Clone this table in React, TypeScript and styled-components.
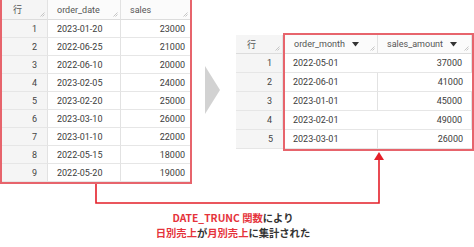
import React from "react";
import styled, { createGlobalStyle } from "styled-components";

const GlobalStyle = createGlobalStyle`
  html, body {
    margin: 0;
    padding: 0;
    background: #ffffff;
  }
  body {
    font-family: Roboto, "Noto Sans", sans-serif;
  }
`;

const FRAME_RED = "#e7646c";
const LINE_RED = "#e41f28";
const TEXT_RED = "#e5333b";

type Daily = { date: string; sales: number };
type Monthly = { month: string; amount: number };

const daily: Daily[] = [
  { date: "2023-01-20", sales: 23000 },
  { date: "2022-06-25", sales: 21000 },
  { date: "2022-06-10", sales: 20000 },
  { date: "2023-02-05", sales: 24000 },
  { date: "2023-02-20", sales: 25000 },
  { date: "2023-03-10", sales: 26000 },
  { date: "2023-01-10", sales: 22000 },
  { date: "2022-05-15", sales: 18000 },
  { date: "2022-05-20", sales: 19000 },
];

const monthly: Monthly[] = [
  { month: "2022-05-01", amount: 37000 },
  { month: "2022-06-01", amount: 41000 },
  { month: "2023-01-01", amount: 45000 },
  { month: "2023-02-01", amount: 49000 },
  { month: "2023-03-01", amount: 26000 },
];

export default function App() {
  return (
    <>
      <GlobalStyle />
      <Stage>
        <TopRow>
          <LeftFrame>
            <Grid $cols="46px 73px 69px" $header={20} $row={18}>
              <HeadCell $rowNum>
                行
                <ResizeMark />
              </HeadCell>
              <HeadCell>
                order_date
                <ResizeMark />
              </HeadCell>
              <HeadCell>
                sales
                <ResizeMark />
              </HeadCell>
              {daily.map((d, i) => (
                <React.Fragment key={i}>
                  <RowNum>{i + 1}</RowNum>
                  <Cell>{d.date}</Cell>
                  <Cell $right>{d.sales}</Cell>
                </React.Fragment>
              ))}
            </Grid>
          </LeftFrame>

          <ArrowSlot>
            <svg width="18" height="48" viewBox="0 0 18 48">
              <polygon points="1,0 16,24 1,48" fill="#d2d2d2" />
            </svg>
          </ArrowSlot>

          <RightTable>
            <RowNumColumn>
              <Grid $cols="47px" $header={19} $row={19}>
                <HeadCell $rowNum>
                  行
                  <ResizeMark />
                </HeadCell>
                {monthly.map((_, i) => (
                  <RowNum key={i}>{i + 1}</RowNum>
                ))}
              </Grid>
            </RowNumColumn>
            <RightFrame>
              <Grid $cols="93px 94px" $header={19} $row={19}>
                <HeadCell>
                  order_month
                  <SortCaret />
                  <ResizeMark />
                </HeadCell>
                <HeadCell>
                  sales_amount
                  <SortCaret />
                  <ResizeMark />
                </HeadCell>
                {monthly.map((m, i) => (
                  <React.Fragment key={i}>
                    <Cell $pad={8}>{m.month}</Cell>
                    <Cell $right $pad={9}>{m.amount}</Cell>
                  </React.Fragment>
                ))}
              </Grid>
            </RightFrame>
          </RightTable>
        </TopRow>

        <Caption>
          <CaptionLine>
            <Red>DATE_TRUNC 関数</Red>により
          </CaptionLine>
          <CaptionLine>
            <Red>日別売上</Red>が<Red>月別売上</Red>に集計された
          </CaptionLine>
        </Caption>

        <Connector width="474" height="247" viewBox="0 0 474 247">
          <polyline
            points="96,184 96,203 379,203 379,159"
            fill="none"
            stroke={LINE_RED}
            strokeWidth="1.6"
          />
          <polygon points="379,152 374,160 384,160" fill={LINE_RED} />
        </Connector>
      </Stage>
    </>
  );
}

function ResizeMark() {
  return (
    <Mark width="5" height="5" viewBox="0 0 5 5">
      <line x1="0.5" y1="4.5" x2="4.5" y2="0.5" stroke="#b9b9b9" strokeWidth="0.8" />
      <line x1="2.5" y1="4.5" x2="4.5" y2="2.5" stroke="#b9b9b9" strokeWidth="0.8" />
    </Mark>
  );
}

function SortCaret() {
  return (
    <Caret width="7" height="5" viewBox="0 0 7 5">
      <polygon points="0,0 7,0 3.5,4.5" fill="#333" />
    </Caret>
  );
}

const Stage = styled.div`
  position: relative;
  width: 474px;
  height: 247px;
  overflow: hidden;
`;

const TopRow = styled.div`
  display: flex;
  align-items: flex-start;
`;

const LeftFrame = styled.div`
  width: 188px;
  border: 2px solid ${FRAME_RED};
  border-top: 0;
`;

const ArrowSlot = styled.div`
  width: 44px;
  display: flex;
  justify-content: flex-start;
  padding: 66px 0 0 12px;
  box-sizing: border-box;
`;

const RightTable = styled.div`
  display: flex;
  margin-top: 33px;
`;

const RowNumColumn = styled.div`
  border-top: 2px solid transparent;
  border-bottom: 2px solid transparent;
`;

const RightFrame = styled.div`
  border: 2px solid ${FRAME_RED};
`;

const Grid = styled.div<{ $cols: string; $header: number; $row: number }>`
  display: grid;
  grid-template-columns: ${({ $cols }) => $cols};
  grid-template-rows: ${({ $header }) => $header}px;
  grid-auto-rows: ${({ $row }) => $row}px;
  font-size: 9px;
  color: #3c3c3c;
`;

const BaseCell = styled.div`
  position: relative;
  display: flex;
  align-items: center;
  box-sizing: border-box;
  border-right: 1px solid #e2e2e2;
  border-bottom: 1px solid #e6e6e6;
  white-space: nowrap;
  &:last-child {
    border-right: 0;
  }
`;

const HeadCell = styled(BaseCell)<{ $rowNum?: boolean }>`
  padding-left: ${({ $rowNum }) => ($rowNum ? 11 : 9)}px;
  background: ${({ $rowNum }) => ($rowNum ? "#f5f5f5" : "#fbfbfb")};
  color: #555;
  font-family: Roboto, "Noto Sans CJK JP", sans-serif;
  border-bottom-color: #dcdcdc;
  &:nth-child(3n) {
    border-right: 0;
  }
`;

const RowNum = styled(BaseCell)`
  justify-content: flex-end;
  padding-right: 10px;
  background: #f5f5f5;
  color: #444;
`;

const Cell = styled(BaseCell)<{ $right?: boolean; $pad?: number }>`
  justify-content: ${({ $right }) => ($right ? "flex-end" : "flex-start")};
  padding-left: ${({ $right, $pad }) => ($right ? 0 : $pad ?? 9)}px;
  padding-right: ${({ $right, $pad }) => ($right ? $pad ?? 5 : 0)}px;
  &:nth-child(3n) {
    border-right: 0;
  }
`;

const Mark = styled.svg`
  position: absolute;
  right: 2px;
  bottom: 2px;
`;

const Caret = styled.svg`
  margin-left: 7px;
`;

const Caption = styled.div`
  margin-top: 26px;
  padding-right: 8px;
  display: flex;
  flex-direction: column;
  align-items: center;
  font-family: "Noto Sans CJK JP", "Noto Sans", sans-serif;
  font-weight: 700;
  font-size: 10.3px;
  color: #333;
`;

const CaptionLine = styled.div`
  line-height: 15px;
`;

const Red = styled.span`
  color: ${TEXT_RED};
`;

const Connector = styled.svg`
  position: absolute;
  left: 0;
  top: 0;
  pointer-events: none;
`;
